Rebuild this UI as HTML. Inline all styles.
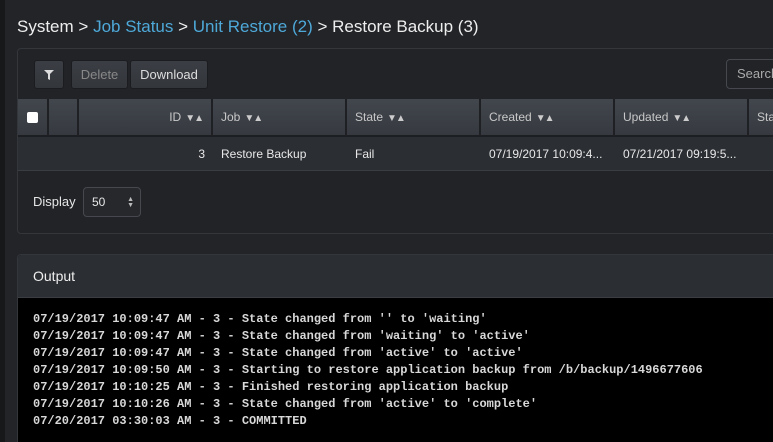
<!DOCTYPE html>
<html style="width:773px;height:442px;overflow:hidden"><head><meta charset="utf-8"><style>
*{box-sizing:border-box;margin:0;padding:0}
body{width:773px;height:442px;overflow:hidden;background:#222428;font-family:"Liberation Sans",sans-serif;color:#e6e6e6;position:relative}
.abs{position:absolute}
.title{left:17px;top:17px;font-size:17px;color:#eee;white-space:nowrap}
.title a{color:#4ea9d9;text-decoration:none}
.panel{left:17px;top:48px;width:770px;height:186px;border:1px solid #33363b;border-radius:4px;background:#212327}
.btn{height:29px;border-radius:3px;background:linear-gradient(#3b3e44,#33363b);border:1px solid #1b1c1f;font-size:13px;line-height:27px;text-align:center;color:#ddd}
.th{top:99px;height:38px;background:linear-gradient(#42464d,#363a40);border-right:2px solid #1e2024;border-bottom:2px solid #1c1e21;font-size:12px;line-height:36px;padding-left:8px;color:#c8c8c8}
.td{top:137px;height:34px;font-size:12px;line-height:34px;color:#e8e8e8;padding-left:8px;white-space:nowrap}
.arr{font-size:10px;letter-spacing:-1px;margin-left:4px;color:#ccc}
pre{font-family:"Liberation Mono",monospace;font-size:12px;font-weight:bold;line-height:17px;color:#d8d8d8}
</style></head><body>
<div class="abs" style="left:0;top:0;width:5px;height:442px;background:#17181a"></div>
<div class="abs title">System &gt; <a>Job Status</a> &gt; <a>Unit Restore (2)</a> &gt; Restore Backup (3)</div>
<div class="abs panel"></div>
<div class="abs btn" style="left:34px;top:60px;width:30px"><svg width="10" height="10" viewBox="0 0 10 10" style="margin-top:9px"><path d="M0 0H10L6 4V10L4 9V4Z" fill="#ddd"/></svg></div>
<div class="abs btn" style="left:71px;top:60px;width:57px;color:#888">Delete</div>
<div class="abs btn" style="left:130px;top:60px;width:78px">Download</div>
<div class="abs" style="left:726px;top:59px;width:60px;height:30px;border:1px solid #45484e;border-radius:4px;font-size:13px;line-height:28px;padding-left:10px;color:#aaa">Search</div>
<div class="abs" style="left:18px;top:137px;width:760px;height:34px;background:#2b2e33;border-bottom:1px solid #3a3d42"></div>
<div class="abs th" style="left:18px;width:31px"><div style="position:absolute;left:9px;top:13px;width:11px;height:11px;background:#fff;border-radius:2px"></div></div>
<div class="abs th" style="left:49px;width:30px"></div>
<div class="abs th" style="left:79px;width:134px;text-align:right;padding-right:8px">ID<span class="arr">▼▲</span></div>
<div class="abs th" style="left:213px;width:134px">Job<span class="arr">▼▲</span></div>
<div class="abs th" style="left:347px;width:134px">State<span class="arr">▼▲</span></div>
<div class="abs th" style="left:481px;width:134px">Created<span class="arr">▼▲</span></div>
<div class="abs th" style="left:615px;width:134px">Updated<span class="arr">▼▲</span></div>
<div class="abs th" style="left:749px;width:40px">Sta</div>
<div class="abs td" style="left:79px;width:134px;text-align:right;padding-right:8px">3</div>
<div class="abs td" style="left:213px">Restore Backup</div>
<div class="abs td" style="left:347px">Fail</div>
<div class="abs td" style="left:481px">07/19/2017 10:09:4...</div>
<div class="abs td" style="left:615px">07/21/2017 09:19:5...</div>
<div class="abs" style="left:33px;top:194px;font-size:13px;color:#e6e6e6">Display</div>
<div class="abs" style="left:83px;top:187px;width:58px;height:30px;border:1px solid #45484e;border-radius:4px;background:#26282c;font-size:12px;line-height:28px;padding-left:8px">50<span style="position:absolute;right:6px;top:0;font-size:7px;line-height:6px;padding-top:9px;color:#bbb">▲<br>▼</span></div>
<div class="abs" style="left:17px;top:254px;width:770px;height:188px;border:1px solid #33363b;border-bottom:none;border-radius:4px 4px 0 0;background:#000;overflow:hidden">
<div style="height:43px;background:#2b2e33;border-bottom:1px solid #3a3d42;font-size:14px;line-height:42px;padding-left:15px;color:#eee">Output</div>
<pre style="padding:13px 0 0 15px">07/19/2017 10:09:47 AM - 3 - State changed from '' to 'waiting'
07/19/2017 10:09:47 AM - 3 - State changed from 'waiting' to 'active'
07/19/2017 10:09:47 AM - 3 - State changed from 'active' to 'active'
07/19/2017 10:09:50 AM - 3 - Starting to restore application backup from /b/backup/1496677606
07/19/2017 10:10:25 AM - 3 - Finished restoring application backup
07/19/2017 10:10:26 AM - 3 - State changed from 'active' to 'complete'
07/20/2017 03:30:03 AM - 3 - COMMITTED</pre>
</div>
</body></html>
